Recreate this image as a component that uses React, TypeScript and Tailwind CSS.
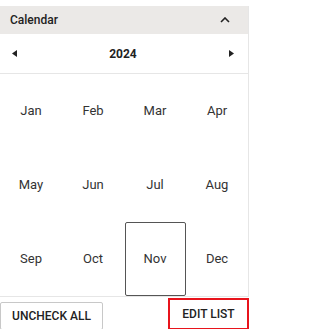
import React from 'react';

const months = ['Jan', 'Feb', 'Mar', 'Apr', 'May', 'Jun', 'Jul', 'Aug', 'Sep', 'Oct', 'Nov', 'Dec'];

const App: React.FC = () => {
    const selected = 'Nov';

    return (
        <div className="h-[329px] w-[253px] overflow-hidden bg-white pt-[6px] font-['Roboto',sans-serif] text-[#222]">
            <div className="w-[249px] border-r border-[#e6e6e6]">
                <div className="flex h-[28px] items-center justify-between bg-[#ebe9e7] pl-[10px] pr-[18px]">
                    <span className="text-[12px] font-medium">Calendar</span>
                    <svg width="10" height="6" viewBox="0 0 10 6" fill="none">
                        <path d="M1 5L5 1L9 5" stroke="#222" strokeWidth="1.6" />
                    </svg>
                </div>
                <div className="flex h-[40px] items-center justify-between border-b border-[#e6e6e6] pl-[12px] pr-[14px]">
                    <svg width="5" height="7" viewBox="0 0 5 7">
                        <path d="M5 0L0 3.5L5 7Z" fill="#222" />
                    </svg>
                    <span className="text-[12px] font-bold">2024</span>
                    <svg width="5" height="7" viewBox="0 0 5 7">
                        <path d="M0 0L5 3.5L0 7Z" fill="#222" />
                    </svg>
                </div>
                <div className="grid grid-cols-4 grid-rows-[repeat(3,74px)] border-b border-[#e6e6e6]">
                    {months.map((m) => (
                        <div key={m} className="flex items-center justify-center">
                            <div
                                className={
                                    m === selected
                                        ? 'flex h-[74px] w-[61px] items-center justify-center rounded-[2px] border border-[#555] text-[13px] text-[#333]'
                                        : 'flex h-[74px] w-[61px] items-center justify-center text-[13px] text-[#333]'
                                }
                            >
                                {m}
                            </div>
                        </div>
                    ))}
                </div>
            </div>
            <div className="flex w-[249px] items-start justify-between pt-[1px]">
                <button className="mt-[4px] h-[28px] w-[103px] rounded-[2px] border border-[#c8c8c8] bg-white text-[12px] font-medium text-[#222]">
                    UNCHECK ALL
                </button>
                <button className="h-[32px] w-[81px] border-2 border-[#e8141c] bg-white text-[12px] font-medium text-[#222]">
                    EDIT LIST
                </button>
            </div>
        </div>
    );
};

export default App;
